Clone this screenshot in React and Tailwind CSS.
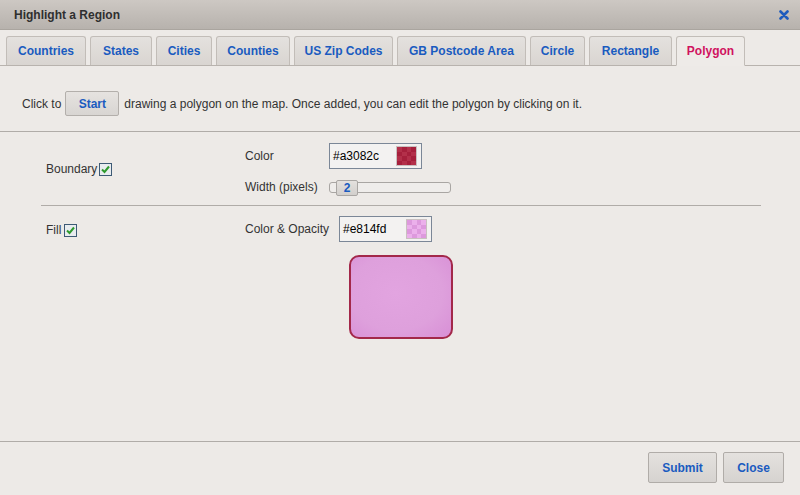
import React from "react";

const tabs = [
  ["Countries", "w-[80px]"],
  ["States", "w-[62px]"],
  ["Cities", "w-[56px]"],
  ["Counties", "w-[74px]"],
  ["US Zip Codes", "w-[99px]"],
  ["GB Postcode Area", "w-[129px]"],
  ["Circle", "w-[55px]"],
  ["Rectangle", "w-[83px]"],
  ["Polygon", "w-[69px]"],
];

function Check() {
  return (
    <span className="inline-flex items-center justify-center w-[13px] h-[13px] border border-[#3d5a75] bg-[#e8ecef]">
      <svg width="11" height="11" viewBox="0 0 11 11">
        <path d="M2 5.5 L4.5 8 L9 2.5" fill="none" stroke="#2e9a2e" strokeWidth="2" />
      </svg>
    </span>
  );
}

function Swatch({ a, b }) {
  const cells = [];
  for (let i = 0; i < 16; i++) {
    const r = Math.floor(i / 4);
    const c = i % 4;
    cells.push(
      <div key={i} style={{ background: (r + c) % 2 === 0 ? a : b }} />
    );
  }
  return (
    <div className="w-[21px] h-[20px] border border-[#c9c0c0] grid grid-cols-4 grid-rows-4">
      {cells}
    </div>
  );
}

function ColorInput({ value, a, b }) {
  return (
    <div className="w-[93px] h-[26px] border border-[#7b8797] bg-[#f3f2f1] flex items-center justify-between pl-[3px] pr-[4px]">
      <span className="text-[12px] text-black">{value}</span>
      <Swatch a={a} b={b} />
    </div>
  );
}

export default function App() {
  return (
    <div
      className="w-[800px] h-[495px] flex flex-col bg-[#edeae7] text-[#333] overflow-hidden"
      style={{ fontFamily: '"Liberation Sans", Arial, sans-serif' }}
    >
      <div className="h-[30px] shrink-0 flex items-center justify-between pl-[14px] pr-[11px] bg-gradient-to-b from-[#cdc8c3] to-[#b7b2ad] border-b border-[#aaa59f]">
        <span className="text-[12px] font-bold text-[#2f2f2f]">Highlight a Region</span>
        <svg width="10" height="10" viewBox="0 0 10 10">
          <path d="M1.5 1.5 L8.5 8.5 M8.5 1.5 L1.5 8.5" stroke="#1d5bbd" strokeWidth="2.6" strokeLinecap="round" />
        </svg>
      </div>

      <div className="mt-[6px] h-[30px] shrink-0 flex items-end gap-[4px] pl-[6px] border-b border-[#b8b3ae]">
        {tabs.map(([t, w]) => {
          const active = t === "Polygon";
          return (
            <div
              key={t}
              className={
                w +
                " shrink-0 flex items-center justify-center rounded-t-[3px] border border-[#c2bdb8] text-[12px] font-bold whitespace-nowrap " +
                (active
                  ? "bg-[#eeebe8] text-[#d0125f] h-[30px] mb-[-1px] border-b-[#eeebe8]"
                  : "h-[29px] bg-gradient-to-b from-[#e4e1de] to-[#d9d5d1] text-[#1a5bc0] border-b-0")
              }
            >
              {t}
            </div>
          );
        })}
      </div>

      <div className="flex items-center pl-[22px] mt-[25px] h-[25px] shrink-0 text-[12px] text-[#333]">
        <span>Click to</span>
        <div className="ml-[4px] mr-[5px] w-[54px] h-[25px] flex items-center justify-center border border-[#b3afab] rounded-[2px] bg-gradient-to-b from-[#e6e3e0] to-[#d8d5d2] text-[#1a5bc0] font-bold">
          Start
        </div>
        <span>drawing a polygon on the map. Once added, you can edit the polygon by clicking on it.</span>
      </div>

      <div className="mt-[15px] h-[1px] shrink-0 bg-[#b0aca8]" />

      <div className="flex pt-[11px] pb-[10px] shrink-0">
        <div className="w-[245px] pl-[46px] flex items-center gap-[2px] text-[12px]">
          <span>Boundary</span>
          <Check />
        </div>
        <div className="flex flex-col">
          <div className="flex items-center h-[26px]">
            <span className="w-[84px] text-[12px]">Color</span>
            <ColorInput value="#a3082c" a="#b3304a" b="#a6203c" />
          </div>
          <div className="flex items-center h-[16px] mt-[10px]">
            <span className="w-[84px] text-[12px]">Width (pixels)</span>
            <div className="relative w-[122px] h-[11px] border border-[#a9a6a3] rounded-[3px] bg-[#efedeb]">
              <div className="absolute left-[6px] top-[-3px] w-[22px] h-[16px] border border-[#a9a6a3] rounded-[2px] bg-gradient-to-b from-[#e4e1de] to-[#d2cfcc] flex items-center justify-center text-[12px] font-bold text-[#1a5bc0] leading-none">
                2
              </div>
            </div>
          </div>
        </div>
      </div>

      <div className="ml-[41px] w-[720px] h-[1px] shrink-0 bg-[#b0aca8]" />

      <div className="flex pt-[10px] shrink-0">
        <div className="w-[245px] pl-[46px] flex items-center gap-[3px] h-[26px] pt-[2px] text-[12px]">
          <span>Fill</span>
          <Check />
        </div>
        <div className="flex flex-col">
          <div className="flex items-center h-[26px]">
            <span className="w-[94px] text-[12px]">Color &amp; Opacity</span>
            <ColorInput value="#e814fd" a="#dd99dd" b="#ebb0eb" />
          </div>
          <div
            className="ml-[104px] mt-[13px] w-[104px] h-[84px] rounded-[10px] border-2 border-[#a3284a]"
            style={{
              background:
                "radial-gradient(ellipse at 45% 45%, #e2a4e0 0%, #dea0dc 60%, #d88fd6 100%)",
            }}
          />
        </div>
      </div>

      <div className="flex-1" />

      <div className="h-[1px] shrink-0 bg-[#b0aca8]" />

      <div className="h-[53px] shrink-0 flex justify-end items-start pt-[10px] pr-[16px] gap-[6px]">
        <div className="w-[69px] h-[31px] flex items-center justify-center border border-[#b0aca8] rounded-[2px] bg-gradient-to-b from-[#e4e1de] to-[#d6d3d0] text-[12px] font-bold text-[#1a5bc0]">
          Submit
        </div>
        <div className="w-[61px] h-[31px] flex items-center justify-center border border-[#b0aca8] rounded-[2px] bg-gradient-to-b from-[#e4e1de] to-[#d6d3d0] text-[12px] font-bold text-[#1a5bc0]">
          Close
        </div>
      </div>
    </div>
  );
}
